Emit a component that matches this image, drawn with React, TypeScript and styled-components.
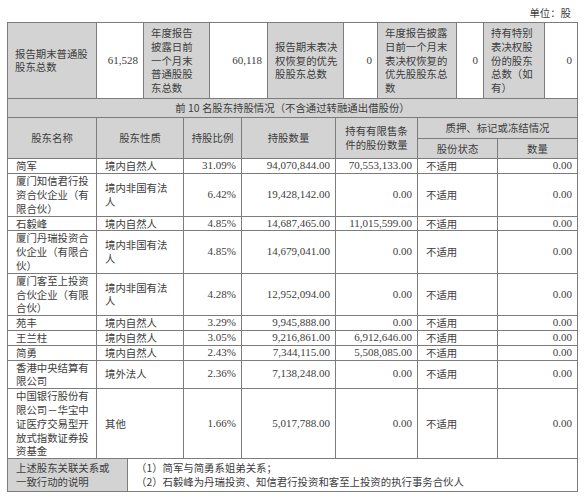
import React from "react";
import styled, { createGlobalStyle } from "styled-components";

const GlobalStyle = createGlobalStyle`
  body {
    margin: 0;
    background: #ffffff;
    font-family: "Noto Sans CJK SC", sans-serif;
    color: #3d3d3d;
  }
`;

type Row = {
  name: string[];
  nature: string[];
  ratio: string;
  count: string;
  restricted: string;
  status: string;
  qty: string;
};

const rows: Row[] = [
  { name: ["简军"], nature: ["境内自然人"], ratio: "31.09%", count: "94,070,844.00", restricted: "70,553,133.00", status: "不适用", qty: "0.00" },
  { name: ["厦门知信君行投", "资合伙企业（有", "限合伙）"], nature: ["境内非国有法", "人"], ratio: "6.42%", count: "19,428,142.00", restricted: "0.00", status: "不适用", qty: "0.00" },
  { name: ["石毅峰"], nature: ["境内自然人"], ratio: "4.85%", count: "14,687,465.00", restricted: "11,015,599.00", status: "不适用", qty: "0.00" },
  { name: ["厦门丹瑞投资合", "伙企业（有限合", "伙）"], nature: ["境内非国有法", "人"], ratio: "4.85%", count: "14,679,041.00", restricted: "0.00", status: "不适用", qty: "0.00" },
  { name: ["厦门客至上投资", "合伙企业（有限", "合伙）"], nature: ["境内非国有法", "人"], ratio: "4.28%", count: "12,952,094.00", restricted: "0.00", status: "不适用", qty: "0.00" },
  { name: ["苑丰"], nature: ["境内自然人"], ratio: "3.29%", count: "9,945,888.00", restricted: "0.00", status: "不适用", qty: "0.00" },
  { name: ["王兰柱"], nature: ["境内自然人"], ratio: "3.05%", count: "9,216,861.00", restricted: "6,912,646.00", status: "不适用", qty: "0.00" },
  { name: ["简勇"], nature: ["境内自然人"], ratio: "2.43%", count: "7,344,115.00", restricted: "5,508,085.00", status: "不适用", qty: "0.00" },
  { name: ["香港中央结算有", "限公司"], nature: ["境外法人"], ratio: "2.36%", count: "7,138,248.00", restricted: "0.00", status: "不适用", qty: "0.00" },
  { name: ["中国银行股份有", "限公司－华宝中", "证医疗交易型开", "放式指数证券投", "资基金"], nature: ["其他"], ratio: "1.66%", count: "5,017,788.00", restricted: "0.00", status: "不适用", qty: "0.00" },
];

const Lines = ({ lines }: { lines: string[] }) => (
  <>
    {lines.map((l, i) => (
      <React.Fragment key={i}>
        {i > 0 && <br />}
        {l}
      </React.Fragment>
    ))}
  </>
);

const App = () => {
  return (
    <Page>
      <GlobalStyle />
      <Unit>单位：股</Unit>
      <Table>
        <colgroup>
          {[89, 47, 66, 58, 76, 34, 79, 27, 61, 33].map((w, i) => (
            <col key={i} style={{ width: w }} />
          ))}
        </colgroup>
        <tbody>
          <tr>
            <SummaryCell $gray>
              <Lines lines={["报告期末普通股", "股东总数"]} />
            </SummaryCell>
            <SummaryCell $num>61,528</SummaryCell>
            <SummaryCell $gray>
              <Lines lines={["年度报告", "披露日前", "一个月末", "普通股股", "东总数"]} />
            </SummaryCell>
            <SummaryCell $num>60,118</SummaryCell>
            <SummaryCell $gray>
              <Lines lines={["报告期末表决", "权恢复的优先", "股股东总数"]} />
            </SummaryCell>
            <SummaryCell $num>0</SummaryCell>
            <SummaryCell $gray>
              <Lines lines={["年度报告披露", "日前一个月末", "表决权恢复的", "优先股股东总", "数"]} />
            </SummaryCell>
            <SummaryCell $num>0</SummaryCell>
            <SummaryCell $gray>
              <Lines lines={["持有特别", "表决权股", "份的股东", "总数（如", "有）"]} />
            </SummaryCell>
            <SummaryCell $num>0</SummaryCell>
          </tr>
        </tbody>
      </Table>
      <Table $joined>
        <colgroup>
          {[89, 87, 58, 94, 82, 80, 80].map((w, i) => (
            <col key={i} style={{ width: w }} />
          ))}
        </colgroup>
        <tbody>
          <tr>
            <TitleCell colSpan={7}>前 10 名股东持股情况（不含通过转融通出借股份）</TitleCell>
          </tr>
          <tr>
            <HeadCell rowSpan={2}>股东名称</HeadCell>
            <HeadCell rowSpan={2}>股东性质</HeadCell>
            <HeadCell rowSpan={2}>持股比例</HeadCell>
            <HeadCell rowSpan={2}>持股数量</HeadCell>
            <HeadCell rowSpan={2}>
              <Lines lines={["持有有限售条", "件的股份数量"]} />
            </HeadCell>
            <HeadCell colSpan={2}>质押、标记或冻结情况</HeadCell>
          </tr>
          <tr>
            <HeadCell>股份状态</HeadCell>
            <HeadCell>数量</HeadCell>
          </tr>
          {rows.map((r, i) => (
            <tr key={i}>
              <Cell>
                <Lines lines={r.name} />
              </Cell>
              <Cell>
                <Lines lines={r.nature} />
              </Cell>
              <Cell $num>{r.ratio}</Cell>
              <Cell $num>{r.count}</Cell>
              <Cell $num>{r.restricted}</Cell>
              <Cell>{r.status}</Cell>
              <Cell $num>{r.qty}</Cell>
            </tr>
          ))}
        </tbody>
      </Table>
      <Table $joined>
        <colgroup>
          <col style={{ width: 120 }} />
          <col style={{ width: 450 }} />
        </colgroup>
        <tbody>
          <tr>
            <NoteCell $gray>
              <Lines lines={["上述股东关联关系或", "一致行动的说明"]} />
            </NoteCell>
            <NoteCell>
              <Lines
                lines={[
                  "（1）简军与简勇系姐弟关系；",
                  "（2）石毅峰为丹瑞投资、知信君行投资和客至上投资的执行事务合伙人",
                ]}
              />
            </NoteCell>
          </tr>
        </tbody>
      </Table>
    </Page>
  );
};

const Page = styled.div`
  width: 570px;
  padding: 0 0 0 7px;
  font-size: 10.4px;
  line-height: 13.8px;
`;

const Unit = styled.div`
  height: 22px;
  line-height: 26px;
  text-align: right;
  padding-right: 6px;
`;

const Table = styled.table<{ $joined?: boolean }>`
  width: 570px;
  table-layout: fixed;
  border-collapse: collapse;
  margin-top: ${(p) => (p.$joined ? "-1px" : "0")};
`;

const Cell = styled.td<{ $gray?: boolean; $num?: boolean }>`
  border: 1px solid #7c7c7c;
  padding: ${(p) => (p.$num ? "0 5px 0 2px" : "0 5px 0 8px")};
  vertical-align: middle;
  line-height: 13.8px;
  text-align: ${(p) => (p.$num ? "right" : "left")};
  font-family: ${(p) => (p.$num ? '"Liberation Serif", serif' : '"Noto Sans CJK SC", sans-serif')};
  font-size: ${(p) => (p.$num ? "11px" : "10.4px")};
  background: ${(p) => (p.$gray ? "#d3d3d3" : "#ffffff")};
  white-space: nowrap;
  overflow: hidden;
`;

const SummaryCell = styled(Cell)`
  padding-top: 3px;
  padding-bottom: 3px;
  padding-left: ${(p) => (p.$num ? "2px" : "7px")};
`;

const TitleCell = styled(Cell)`
  background: #d3d3d3;
  text-align: center;
  padding: 2px 0;
`;

const HeadCell = styled(Cell)`
  background: #d3d3d3;
  text-align: center;
  padding: 3px 2px;
`;

const NoteCell = styled(Cell)`
  padding: 2px 8px;
`;

export default App;
